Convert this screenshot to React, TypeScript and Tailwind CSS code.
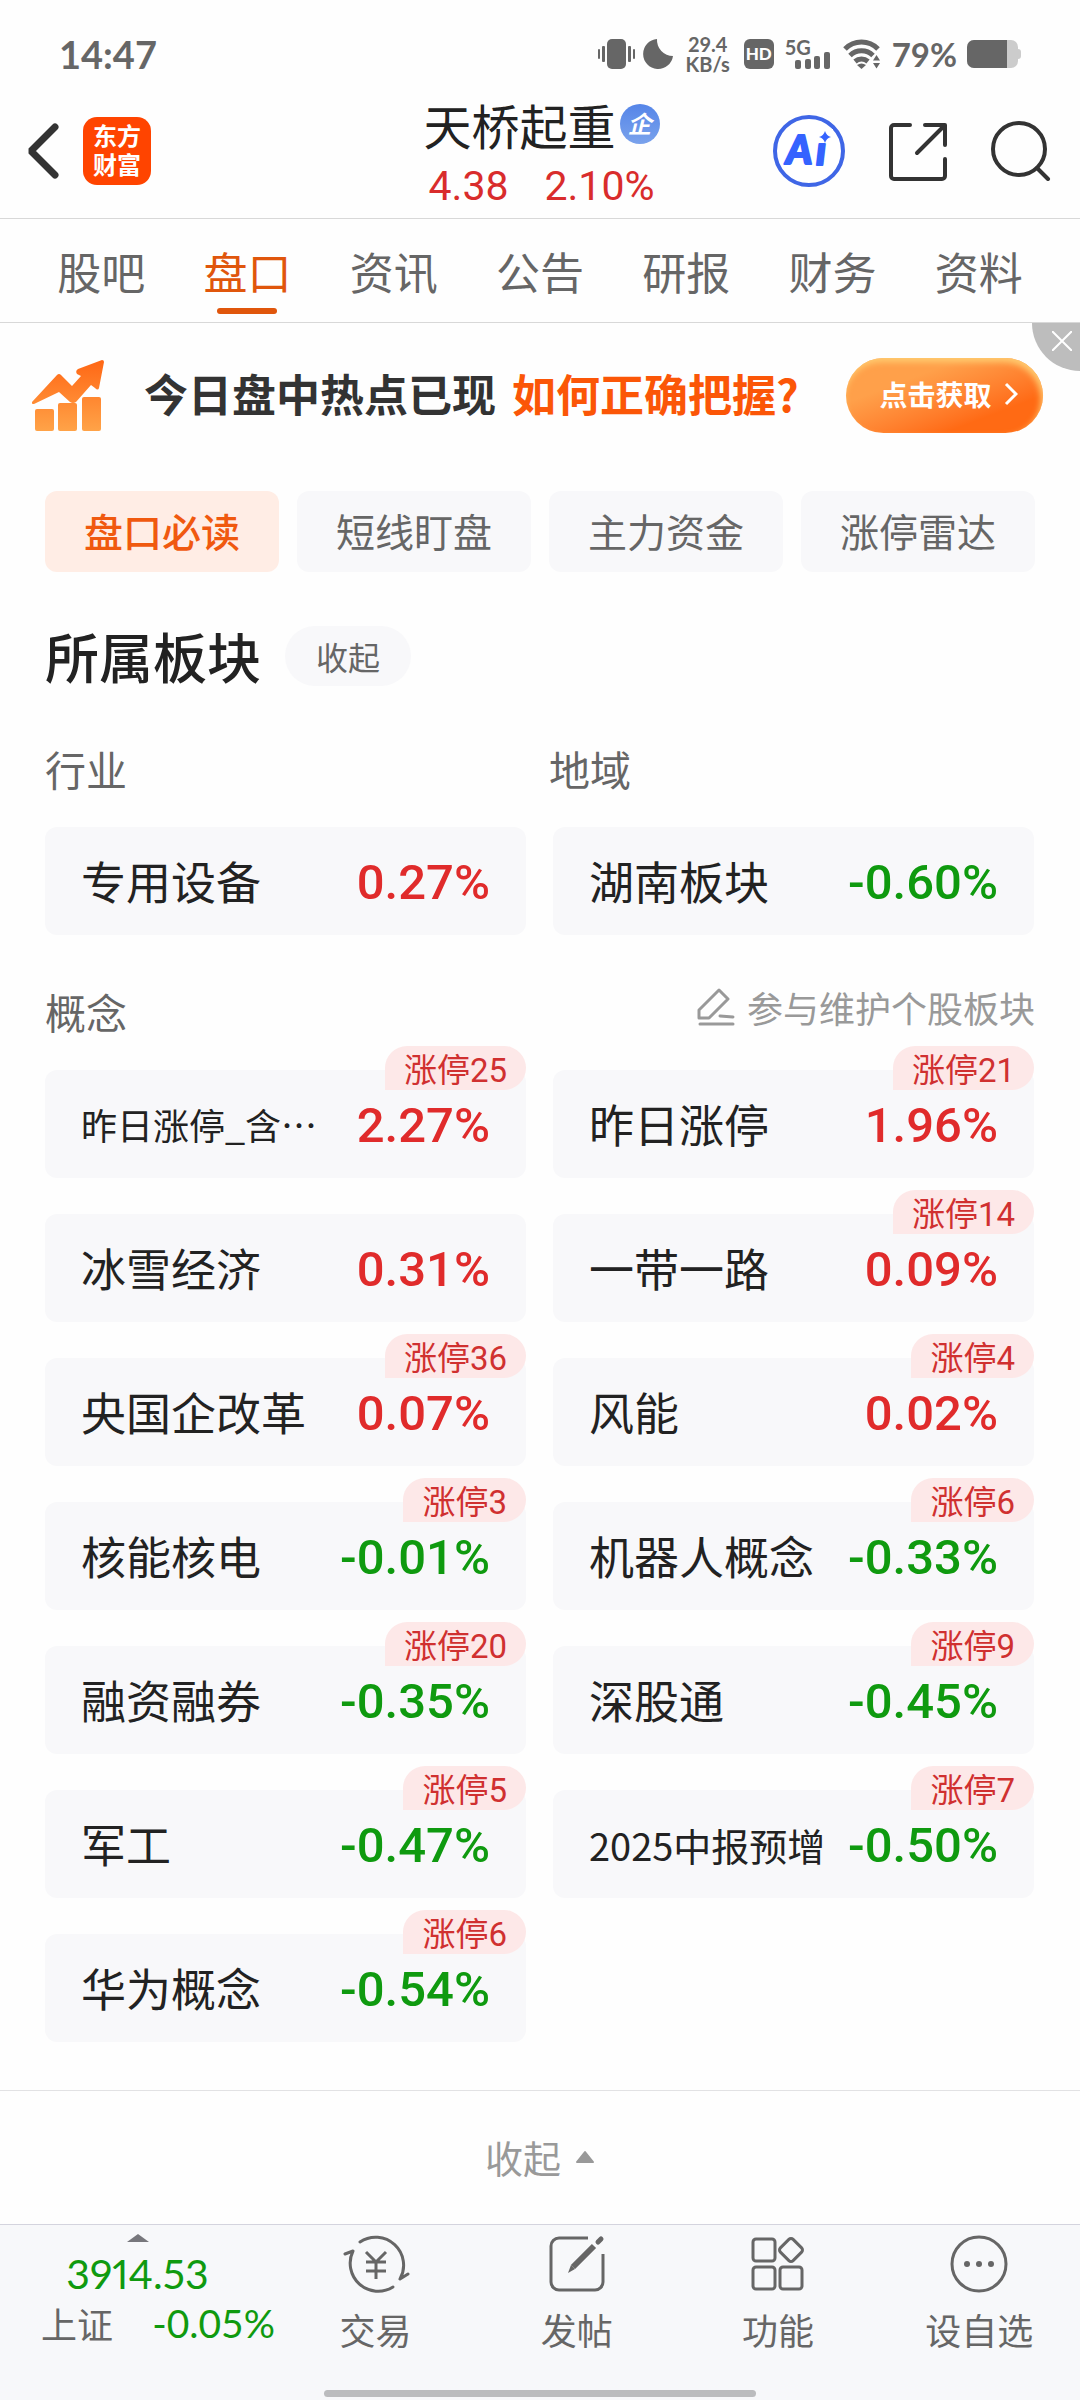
import { useState } from 'react';

type Sector = { name: string; change: string; limitUp?: number; size?: string };

const TABS = ['股吧', '盘口', '资讯', '公告', '研报', '财务', '资料'];
const CHIPS = ['盘口必读', '短线盯盘', '主力资金', '涨停雷达'];

// Long names get a smaller text size so that they stay on one line
const CONCEPTS: Sector[] = [
  { name: '昨日涨停_含…', change: '2.27%', limitUp: 25, size: 'text-[36px]' },
  { name: '昨日涨停', change: '1.96%', limitUp: 21 },
  { name: '冰雪经济', change: '0.31%' },
  { name: '一带一路', change: '0.09%', limitUp: 14 },
  { name: '央国企改革', change: '0.07%', limitUp: 36 },
  { name: '风能', change: '0.02%', limitUp: 4 },
  { name: '核能核电', change: '-0.01%', limitUp: 3 },
  { name: '机器人概念', change: '-0.33%', limitUp: 6 },
  { name: '融资融券', change: '-0.35%', limitUp: 20 },
  { name: '深股通', change: '-0.45%', limitUp: 9 },
  { name: '军工', change: '-0.47%', limitUp: 5 },
  { name: '2025中报预增', change: '-0.50%', limitUp: 7, size: 'text-[38px]' },
  { name: '华为概念', change: '-0.54%', limitUp: 6 },
];

function StatusBar() {
  return (
    <div className="flex h-[84px] items-center justify-between pt-6 pr-[59px] pl-[59px] font-['Lato',sans-serif] font-bold text-[#666]">
      <span className="text-[38px] leading-10">14:47</span>
      <div className="flex items-center">
        <svg width="37" height="32" viewBox="0 0 37 32" fill="#666">
          <rect x="9" y="1" width="19" height="30" rx="5" />
          <rect x="0" y="11" width="2" height="10" rx="1" />
          <rect x="4" y="8" width="3" height="16" rx="1" />
          <rect x="30" y="8" width="3" height="16" rx="1" />
          <rect x="35" y="11" width="2" height="10" rx="1" />
        </svg>
        <svg className="ml-2" width="30" height="32" viewBox="0 0 30 32" fill="#666">
          <path d="M14 1a16 16 0 0 0 16 17A15 15 0 1 1 14 1z" />
        </svg>
        <p className="ml-3 w-[46px] text-center text-[20px] leading-5">
          29.4
          <br />
          KB/s
        </p>
        <span className="ml-[13px] flex h-[30px] w-[30px] items-center justify-center rounded-md bg-[#666] text-[17px] leading-5 font-black text-white">
          HD
        </span>
        <div className="relative ml-[11px] h-[30px] w-[46px]">
          <span className="absolute top-0 left-0 text-[20px] leading-4">5G</span>
          <svg width="46" height="30" viewBox="0 0 46 30" fill="#666">
            <rect x="10" y="21" width="6" height="9" rx="2" />
            <rect x="20" y="20" width="6" height="10" rx="2" />
            <rect x="29" y="17" width="6" height="13" rx="2" />
            <rect x="39" y="13" width="6" height="17" rx="2" />
          </svg>
        </div>
        <svg className="ml-3" width="38" height="30" viewBox="0 0 38 30" fill="none" stroke="#666" strokeWidth="5">
          <path d="M2 10a23 23 0 0 1 33 0" />
          <path d="M7 16.500a16.500 16.500 0 0 1 23 0" />
          <path d="M12 22.500a10 10 0 0 1 13 0" />
          <path d="M14 26q4.500-3 9 0l-4.500 4z" fill="#666" stroke="none" />
          <path d="M30 21.500h7l-3.500-5.500zM30 24h7l-3.500 5.500z" fill="#666" stroke="none" />
        </svg>
        <span className="ml-[11px] text-[33px] leading-10">79%</span>
        <svg className="ml-[10px]" width="54" height="28" viewBox="0 0 54 28">
          <rect width="51" height="28" rx="7" fill="#ccc" />
          <path d="M51 9a3 3 0 0 1 3 3v4a3 3 0 0 1-3 3z" fill="#ccc" />
          <path d="M7 0h33v28H7a7 7 0 0 1-7-7V7a7 7 0 0 1 7-7z" fill="#666" />
        </svg>
      </div>
    </div>
  );
}

function Header() {
  return (
    <header className="grid h-[135px] grid-cols-[1fr_auto_1fr] items-center border-b border-[#d8d8d8] pr-[29px] pl-6">
      <div className="flex items-center gap-[23px]">
        <button aria-label="返回">
          <svg width="36" height="58" viewBox="0 0 36 58" fill="none" stroke="#333" strokeWidth="7" strokeLinecap="round">
            <path d="M31 5L7 29l24 24" strokeLinejoin="bevel" />
          </svg>
        </button>
        <a
          href="#"
          className="flex h-[68px] w-[68px] items-center justify-center rounded-[14px] bg-[#ff4400] pb-1 text-2xl leading-[29px] font-bold text-white"
        >
          <span className="w-12">东方财富</span>
        </a>
      </div>

      <div className="flex flex-col items-center pt-1.5 pl-2">
        <h1 className="flex items-center gap-1 text-[48px] leading-[60px] text-[#222]">
          天桥起重
          <span className="flex h-10 w-10 items-center justify-center rounded-full bg-linear-to-b from-[#5585e8] to-[#7aa2ec] pb-0.5 text-[24px] leading-8 font-bold text-white italic">
            企
          </span>
        </h1>
        <p className="flex gap-9 pt-1 font-['Roboto',sans-serif] text-[41px] leading-14 text-[#d92c2c]">
          <span>4.38</span>
          <span>2.10%</span>
        </p>
      </div>

      <div className="flex items-center justify-end gap-[43px]">
        <button aria-label="AI 助手">
          <svg width="72" height="72" viewBox="0 0 72 72">
            <circle cx="36" cy="36" r="34" fill="#fff" stroke="#3f66e6" strokeWidth="4" />
            <g
              fill="#3563ff"
              stroke="#3563ff"
              strokeWidth="2"
              strokeLinejoin="round"
              fontFamily="Lato, sans-serif"
              fontWeight="900"
              fontStyle="italic"
              fontSize="40"
            >
              <text>
                <tspan x="13" y="49">A</tspan>
                <tspan x="43" y="50">i</tspan>
              </text>
            </g>
            <rect x="44" y="14" width="16" height="14" fill="#fff" />
            <path d="M52 16q1.500 5 6 6q-4.500 1-6 6q-1.500-5-6-6q4.500-1 6-6z" fill="#3563ff" />
          </svg>
        </button>
        <button aria-label="分享">
          <svg width="60" height="60" viewBox="0 0 60 60" fill="none" stroke="#333" strokeWidth="4" strokeLinecap="round" strokeLinejoin="round">
            <path d="M22 4H6a3 3 0 0 0-3 3v48a3 3 0 0 0 3 3h48a3 3 0 0 0 3-3V38M37 4h20v20M56 5L29 32" />
          </svg>
        </button>
        <button aria-label="搜索">
          <svg width="60" height="60" viewBox="0 0 60 60" fill="none" stroke="#333" strokeWidth="4" strokeLinecap="round">
            <circle cx="28" cy="28" r="26" />
            <path d="M46 47l11 11" />
          </svg>
        </button>
      </div>
    </header>
  );
}

function Banner() {
  return (
    <section className="relative flex h-36 items-center pr-[37px] pl-8">
      <svg width="72" height="72" viewBox="0 0 72 72">
        <defs>
          <linearGradient id="chart" x1="0" y1="0" x2="0" y2="72" gradientUnits="userSpaceOnUse">
            <stop offset="0" stopColor="#ff6614" />
            <stop offset="1" stopColor="#ffa348" />
          </linearGradient>
        </defs>
        <g fill="url(#chart)">
          <path d="M0 43L25 16q2-2 4 0l11 11 9-10-4-2q-2-3 1-5L70 1q2 0 2 2l-5 26q-1 3-4 0l-4-3-15 17q-3 2-6 0L27 33 2 45q-3 0-2-2z" />
          <rect x="3" y="50" width="19" height="22" rx="2" />
          <rect x="26" y="44" width="19" height="28" rx="2" />
          <rect x="50" y="38" width="19" height="34" rx="2" />
        </g>
      </svg>
      <p className="ml-10 flex gap-4 pb-1 text-[44px] leading-[60px] font-bold whitespace-nowrap text-[#333]">
        今日盘中热点已现
        <span className="text-[#fb5607]">如何正确把握?</span>
      </p>
      <button className="ml-auto flex h-[75px] w-[197px] items-center justify-center gap-3 rounded-full bg-linear-to-br from-[#ffa04a] from-30% to-[#ff6a14] to-75% pb-0.5 pl-2 text-[28px] leading-10 font-bold text-white shadow-[inset_-2px_4px_6px_#ffcb70]">
        点击获取
        <svg width="14" height="24" viewBox="0 0 14 24" fill="none" stroke="#fff" strokeWidth="3">
          <path d="M2 2l10 10L2 22" />
        </svg>
      </button>
      <button
        aria-label="关闭"
        className="absolute top-0 right-0 flex h-12 w-12 items-center justify-center rounded-bl-full bg-[#bdbdbd] pb-3 pl-3"
      >
        <svg width="20" height="20" viewBox="0 0 20 20" stroke="#fff" strokeWidth="2">
          <path d="M0 0l20 20M20 0L0 20" />
        </svg>
      </button>
    </section>
  );
}

function SectorCard({ name, change, limitUp, size = 'text-[45px]' }: Sector) {
  return (
    <a href="#" className="relative flex h-[108px] items-center justify-between rounded-xl bg-[#f8f8fa] px-9">
      <span className={`whitespace-nowrap text-[#222] ${size}`}>{name}</span>
      <span
        className={`pt-1 font-['Roboto',sans-serif] text-[49px] font-medium ${
          change.startsWith('-') ? 'text-[#0f9a0f]' : 'text-[#e02b2b]'
        }`}
      >
        {change}
      </span>
      {limitUp && (
        <span className="absolute -top-6 right-0 h-11 rounded-[22px] rounded-bl-none bg-[#fde8e8] px-[19px] text-[33px] leading-11 text-[#d03030]">
          涨停<span className="font-['Roboto',sans-serif]">{limitUp}</span>
        </span>
      )}
    </a>
  );
}

function BottomBar() {
  return (
    <footer className="relative flex h-44 border-t border-[#d4d4de] bg-[#f7f8fa] text-[36px] text-[#666]">
      <a href="#" className="flex w-[275px] flex-col items-center pt-[9px]">
        <svg width="22" height="8" viewBox="0 0 22 8" fill="#77777c">
          <path d="M11 0l11 8H0z" />
        </svg>
        <span className="mt-2 font-['Lato',sans-serif] text-[41px] leading-12 text-[#0f9a0f] proportional-nums">
          3914.53
        </span>
        <span className="flex w-full items-center justify-between pl-[41px] leading-[50px]">
          上证
          <span className="font-['Lato',sans-serif] text-[39px] text-[#0f9a0f]">-0.05%</span>
        </span>
      </a>
      <nav className="grid flex-1 grid-cols-4">
        <button className="flex flex-col items-center pt-[9px]">
          <svg width="68" height="60" viewBox="0 0 68 60" fill="none" stroke="#666" strokeWidth="3" strokeLinecap="round" strokeLinejoin="round">
            <path d="M18 8A28 28 0 0 1 58 45l8-5" />
            <path d="M51 53A28 28 0 0 1 11 17l-8 3" />
            <path d="M24 18l10 10 10-10M24 28h20M24 37h20M34 28v17" strokeLinecap="butt" />
          </svg>
          <span className="mt-[11px] leading-12">交易</span>
        </button>
        <button className="flex flex-col items-center pt-[9px]">
          <svg width="56" height="60" viewBox="0 0 56 60" fill="none" stroke="#666" strokeWidth="3">
            <path d="M39 4H10a8 8 0 0 0-8 8v36a8 8 0 0 0 8 8h36a8 8 0 0 0 8-8V20" />
            <path d="M24 33L45 12" strokeWidth="6" />
            <path d="M22 31l4 4-7 4z" fill="#666" stroke="none" />
            <path d="M49 8l3-3" strokeWidth="5" strokeLinecap="round" />
          </svg>
          <span className="mt-[11px] leading-12">发帖</span>
        </button>
        <button className="flex flex-col items-center pt-[9px]">
          <svg width="54" height="60" viewBox="0 0 54 60" fill="none" stroke="#666" strokeWidth="3" strokeLinejoin="round">
            <rect x="2" y="5" width="22" height="22" rx="3" />
            <rect x="2" y="33" width="22" height="22" rx="3" />
            <rect x="29" y="33" width="22" height="22" rx="3" />
            <rect x="31" y="7" width="18" height="18" rx="3" transform="rotate(45 40 16)" />
          </svg>
          <span className="mt-[11px] leading-12">功能</span>
        </button>
        <button className="flex flex-col items-center pt-[9px]">
          <svg width="60" height="60" viewBox="0 0 60 60" fill="none" stroke="#666" strokeWidth="3">
            <circle cx="30" cy="30" r="27" />
            <g fill="#666" stroke="none">
              <circle cx="18" cy="30" r="3" />
              <circle cx="30" cy="30" r="3" />
              <circle cx="42" cy="30" r="3" />
            </g>
          </svg>
          <span className="mt-[11px] leading-12">设自选</span>
        </button>
      </nav>
      {/* Home indicator */}
      <div className="absolute bottom-[3px] left-1/2 h-[7px] w-2/5 -translate-x-1/2 rounded-full bg-[#bbbcbe]" />
    </footer>
  );
}

export default function App() {
  const [tab, setTab] = useState('盘口');
  const [chip, setChip] = useState('盘口必读');

  return (
    <div className="flex min-h-screen flex-col bg-[#fefefe] font-['Noto_Sans_CJK_SC',sans-serif]">
      <StatusBar />
      <Header />

      <nav className="grid h-[104px] grid-cols-7 border-b border-[#d8d8d8] px-7">
        {TABS.map((t) => (
          <button
            key={t}
            onClick={() => setTab(t)}
            className={`relative text-[44px] leading-[60px] ${t === tab ? 'text-[#e0560c]' : 'text-[#666]'}`}
          >
            {t}
            {t === tab && (
              <span className="absolute bottom-2 left-1/2 h-1.5 w-[60px] -translate-x-1/2 rounded-full bg-[#e0560c]" />
            )}
          </button>
        ))}
      </nav>

      <Banner />

      <main className="flex-1 px-[45px] pt-6 pb-12">
        <div className="grid grid-cols-4 gap-[18px]">
          {CHIPS.map((c) => (
            <button
              key={c}
              onClick={() => setChip(c)}
              className={`h-[81px] rounded-xl pb-0.5 text-[39px] ${
                c === chip ? 'bg-[#ffede5] font-medium text-[#f0590f]' : 'bg-[#f8f8fa] text-[#666]'
              }`}
            >
              {c}
            </button>
          ))}
        </div>

        <div className="mt-[54px] flex items-center gap-6">
          <h2 className="text-[54px] leading-[60px] font-medium text-[#222]">所属板块</h2>
          <button className="h-[60px] rounded-full bg-[#f8f8fa] px-[31px] text-[32px] text-[#666]">收起</button>
        </div>

        <div className="mt-[58px] grid grid-cols-2 gap-[18px] text-[41px] leading-12 text-[#666]">
          <h3>行业</h3>
          <h3>地域</h3>
        </div>
        <div className="mt-[35px] grid grid-cols-2 gap-[27px] pr-px">
          <SectorCard name="专用设备" change="0.27%" />
          <SectorCard name="湖南板块" change="-0.60%" />
        </div>

        <div className="mt-[52px] flex items-start justify-between">
          <h3 className="text-[41px] leading-12 text-[#666]">概念</h3>
          <a href="#" className="flex items-center gap-3 text-[36px] leading-10 text-[#999]">
            <svg width="38" height="38" viewBox="0 0 38 38" fill="none" stroke="#999" strokeWidth="3" strokeLinecap="round" strokeLinejoin="round">
              <path d="M2 30v-8L22 2l9 9-19 19zM23 28l13 1M3 36h33" />
            </svg>
            参与维护个股板块
          </a>
        </div>
        <div className="mt-[35px] grid grid-cols-2 gap-x-[27px] gap-y-9 pr-px">
          {CONCEPTS.map((s) => (
            <SectorCard key={s.name} {...s} />
          ))}
        </div>
      </main>

      <button className="flex h-[134px] items-center justify-center gap-3.5 border-t border-[#e2e2e4] pb-0.5 text-[38px] text-[#999]">
        收起
        <svg width="20" height="14" viewBox="0 0 20 14" fill="#999" stroke="#999" strokeWidth="2" strokeLinejoin="round">
          <path d="M10 2l8 10H2z" />
        </svg>
      </button>

      <BottomBar />
    </div>
  );
}
